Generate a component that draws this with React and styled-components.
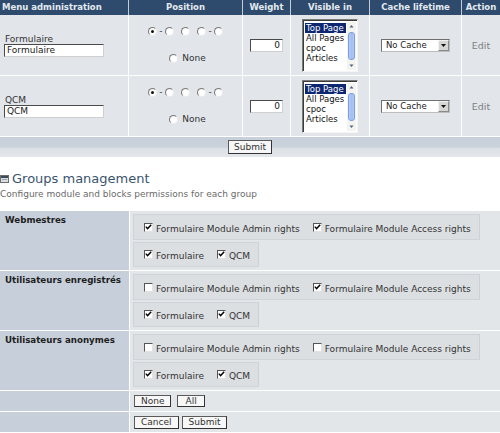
import React from 'react';
import styled, { createGlobalStyle } from 'styled-components';

const GlobalStyle = createGlobalStyle`
  html, body { margin: 0; padding: 0; background: #fff; }
  body {
    font-family: "DejaVu Sans", Verdana, sans-serif;
    font-size: 9px;
    color: #333;
    width: 500px;
    height: 433px;
    overflow: hidden;
  }
`;

const FONT = `"DejaVu Sans", Verdana, sans-serif`;

const Page = styled.div`
  width: 500px;
`;

/* ---------- module table ---------- */
const ModTable = styled.table`
  width: 500px;
  border-collapse: separate;
  border-spacing: 0;
  table-layout: fixed;
`;

const Th = styled.th`
  height: 15px;
  box-sizing: border-box;
  padding: 0 2px;
  background: #2e4b6e;
  color: #e4eaf0;
  font: bold 8.5px/15px ${FONT};
  text-align: ${p => (p.$left ? 'left' : 'center')};
  border-right: 1px solid #c3ccd6;
  white-space: nowrap;
  overflow: hidden;
  &:last-child { border-right: none; }
`;

const Td = styled.td`
  height: ${p => p.$h}px;
  box-sizing: border-box;
  padding: 0;
  background: #e2e6ea;
  border-right: 1px solid #fff;
  border-bottom: 1px solid #fff;
  vertical-align: middle;
  text-align: center;
  &:last-child { border-right: none; }
`;

const FootCell = styled.td`
  height: 20px;
  box-sizing: border-box;
  padding: 0;
  text-align: center;
  vertical-align: middle;
  background: linear-gradient(to bottom, #c7d0da 0%, #cad3dc 50%, #dce1e6 58%, #e3e6ea 100%);
`;

const NameBlock = styled.div`
  display: flex;
  flex-direction: column;
  align-items: flex-start;
  padding-left: 4px;
`;

const NameLabel = styled.span`
  font: 9px/10px ${FONT};
  color: #333;
  padding-left: 1px;
`;

const TextInput = styled.input`
  display: block;
  width: ${p => p.$w}px;
  height: 13px;
  box-sizing: border-box;
  margin: 0;
  padding: 0 2px;
  border: 1px solid;
  border-color: #4a4a4a #cfcfcf #cfcfcf #4a4a4a;
  background: #fff;
  font: 9px/11px ${FONT};
  color: #222;
  text-align: ${p => (p.$right ? 'right' : 'left')};
  outline: none;
`;

const Centered = styled.div`
  display: flex;
  justify-content: center;
  align-items: center;
`;

const PosBlock = styled.div`
  display: flex;
  flex-direction: column;
  align-items: center;
  gap: 18px;
`;

const RadioLine = styled.div`
  display: flex;
  align-items: center;
  height: 9px;
`;

const Radio = styled.span`
  width: 9px;
  height: 9px;
  flex: none;
  box-sizing: border-box;
  border-radius: 50%;
  border: 1px solid;
  border-color: #7b7b7b #ececec #ececec #7b7b7b;
  background: radial-gradient(circle at 60% 60%, #ffffff 40%, #e9e9e9 100%);
  display: flex;
  align-items: center;
  justify-content: center;
  margin: 0 3.5px;
`;

const Dot = styled.span`
  width: 3px;
  height: 3px;
  border-radius: 50%;
  background: #111;
`;

const Dash = styled.span`
  font: 9px/9px ${FONT};
  color: #444;
  margin: 0 -1px;
`;

const RadioText = styled.span`
  font: 9px/9px ${FONT};
  color: #333;
  margin-left: 1px;
`;

const ListBox = styled.div`
  display: flex;
  width: 56px;
  height: 53px;
  box-sizing: border-box;
  border: 1px solid;
  border-color: #7a7a7a #f4f4f4 #f4f4f4 #7a7a7a;
  box-shadow: inset 1px 1px 0 #3c3c3c;
  background: #fff;
  padding: 2px 1px 1px 2px;
`;

const ListItems = styled.div`
  flex: 1;
  display: flex;
  flex-direction: column;
  text-align: left;
  padding-top: 1px;
  overflow: hidden;
`;

const ListItem = styled.div`
  font: 8.5px/10px ${FONT};
  padding-left: 1px;
  margin-right: 1px;
  white-space: nowrap;
  color: ${p => (p.$sel ? '#fff' : '#111')};
  background: ${p => (p.$sel ? '#0c2670' : 'transparent')};
`;

const ScrollBar = styled.div`
  width: 9px;
  display: flex;
  flex-direction: column;
  align-items: center;
  justify-content: space-between;
  background: #f3f3ef;
`;

const ScrollArrow = styled.svg`
  width: 9px;
  height: 8px;
  flex: none;
`;

const ScrollThumb = styled.div`
  width: 7px;
  flex: 1;
  margin: 2px 0;
  box-sizing: border-box;
  border: 1px solid #7c9ede;
  border-radius: 3px;
  background: linear-gradient(to right, #b6cef7, #9dbcf1 60%, #b9cff5);
`;

const Select = styled.div`
  display: flex;
  align-items: center;
  width: 69px;
  height: 13px;
  box-sizing: border-box;
  border: 1px solid;
  border-color: #6f6f6f #bdbdbd #bdbdbd #6f6f6f;
  background: #fff;
`;

const SelectText = styled.span`
  flex: 1;
  text-align: left;
  padding-left: 4px;
  font: 8.5px/11px ${FONT};
  color: #222;
`;

const SelectArrow = styled.span`
  width: 11px;
  height: 11px;
  box-sizing: border-box;
  border: 1px solid;
  border-color: #f2f2f2 #8a8a8a #8a8a8a #f2f2f2;
  background: #d6d6d2;
  display: flex;
  align-items: center;
  justify-content: center;
`;

const EditLink = styled.span`
  font: 9.5px ${FONT};
  color: #808080;
`;

const Button = styled.button`
  height: ${p => p.$h || 13}px;
  box-sizing: border-box;
  margin: 0;
  padding: 0 ${p => p.$px || 6}px;
  border: 1px solid;
  border-color: #5a5a5a #333 #333 #5a5a5a;
  background: #f7f7f7;
  font: 9px/11px ${FONT};
  color: #333;
  cursor: pointer;
`;

/* ---------- groups section ---------- */
const Section = styled.section`
  padding-top: 14px;
`;

const SectionTitle = styled.h3`
  margin: 0;
  display: flex;
  align-items: center;
  gap: 3px;
  font: normal 13px/15px ${FONT};
  color: #3a5470;
`;

const SectionDesc = styled.p`
  margin: 2px 0 11px;
  font: 9px/12px ${FONT};
  color: #6a6a6a;
  white-space: nowrap;
`;

const PermTable = styled.table`
  width: 500px;
  border-collapse: separate;
  border-spacing: 0;
  table-layout: fixed;
`;

const GroupName = styled.th`
  height: ${p => p.$h}px;
  box-sizing: border-box;
  background: #c7d0da;
  text-align: left;
  vertical-align: top;
  padding: 3px 5px 0;
  font: bold 8.7px/13px ${FONT};
  color: #1e1e1e;
  border-right: 1px solid #fff;
  border-bottom: 1px solid #fff;
  white-space: nowrap;
`;

const PermCell = styled.td`
  height: ${p => p.$h}px;
  box-sizing: border-box;
  background: #e3e6e9;
  padding: ${p => (p.$buttons ? '0 3px 0 4px' : '3px 3px 3px')};
  border-bottom: 1px solid #fff;
  vertical-align: ${p => (p.$buttons ? 'middle' : 'top')};
`;

const PermStack = styled.div`
  display: flex;
  flex-direction: column;
  align-items: flex-start;
  gap: 2px;
`;

const PermBox = styled.div`
  display: inline-flex;
  align-items: center;
  gap: 13px;
  height: ${p => p.$h}px;
  box-sizing: border-box;
  padding: 3px 8px 0 10px;
  background: #dcdfe2;
  border: 1px solid #d0d3d7;
  border-right-color: #cdd0d4;
`;

const CheckItem = styled.label`
  display: inline-flex;
  align-items: center;
  gap: 3px;
  font: 9px/12px ${FONT};
  color: #333;
  white-space: nowrap;
`;

const CheckBox = styled.span`
  width: 9px;
  height: 9px;
  flex: none;
  box-sizing: border-box;
  border: 1px solid;
  border-color: #555 #e2e2e2 #e2e2e2 #555;
  background: #fff;
  margin-top: -3px;
  display: flex;
  align-items: center;
  justify-content: center;
`;

const ButtonRow = styled.div`
  display: flex;
  gap: ${p => p.$gap}px;
`;

const GroupIcon = () => (
  <svg width="9" height="8" viewBox="0 0 9 8">
    <rect x="0.5" y="0.5" width="8" height="7" fill="#d9dde2" stroke="#6e6e6e" />
    <rect x="1" y="1" width="7" height="2" fill="#3d4a59" />
    <rect x="2" y="4" width="5" height="1" fill="#9aa3ad" />
  </svg>
);

const Check = ({ on }) => (
  <CheckBox>
    {on && (
      <svg width="7" height="7" viewBox="0 0 7 7">
        <path d="M0.8 2.6 L2.6 4.6 L6.2 0.8" fill="none" stroke="#000" strokeWidth="1.4" />
      </svg>
    )}
  </CheckBox>
);

const Up = () => (
  <ScrollArrow viewBox="0 0 9 8">
    <path d="M2.5 5.5 L4.5 3 L6.5 5.5 Z" fill="#4d6185" />
  </ScrollArrow>
);
const Down = () => (
  <ScrollArrow viewBox="0 0 9 8">
    <path d="M2.5 2.5 L4.5 5 L6.5 2.5 Z" fill="#4d6185" />
  </ScrollArrow>
);

const modules = [
  { name: 'Formulaire', h: 61 },
  { name: 'QCM', h: 61 },
];

const groups = [
  { name: 'Webmestres', admin: true, access: true, form: true, qcm: true },
  { name: 'Utilisateurs enregistrés', admin: false, access: true, form: true, qcm: true },
  { name: 'Utilisateurs anonymes', admin: false, access: false, form: true, qcm: true },
];

const ModuleRow = ({ name, h }) => (
  <tr>
    <Td $h={h} style={{ textAlign: 'left' }}>
      <NameBlock>
        <NameLabel>{name}</NameLabel>
        <TextInput $w={100} defaultValue={name} />
      </NameBlock>
    </Td>
    <Td $h={h}>
      <Centered>
        <PosBlock>
          <RadioLine>
            <Radio><Dot /></Radio>
            <Dash>-</Dash>
            <Radio />
            <Radio />
            <Radio />
            <Dash>-</Dash>
            <Radio />
          </RadioLine>
          <RadioLine>
            <Radio />
            <RadioText>None</RadioText>
          </RadioLine>
        </PosBlock>
      </Centered>
    </Td>
    <Td $h={h}>
      <Centered>
        <TextInput $w={33} $right defaultValue="0" />
      </Centered>
    </Td>
    <Td $h={h}>
      <Centered>
        <ListBox>
          <ListItems>
            <ListItem $sel>Top Page</ListItem>
            <ListItem>All Pages</ListItem>
            <ListItem>cpoc</ListItem>
            <ListItem>Articles</ListItem>
          </ListItems>
          <ScrollBar>
            <Up />
            <ScrollThumb />
            <Down />
          </ScrollBar>
        </ListBox>
      </Centered>
    </Td>
    <Td $h={h}>
      <Centered>
        <Select>
          <SelectText>No Cache</SelectText>
          <SelectArrow>
            <svg width="5" height="3" viewBox="0 0 5 3">
              <path d="M0 0 L5 0 L2.5 3 Z" fill="#111" />
            </svg>
          </SelectArrow>
        </Select>
      </Centered>
    </Td>
    <Td $h={h}>
      <EditLink>Edit</EditLink>
    </Td>
  </tr>
);

export default function App() {
  return (
    <Page>
      <GlobalStyle />
      <ModTable>
        <colgroup>
          <col style={{ width: 129 }} />
          <col style={{ width: 114 }} />
          <col style={{ width: 48 }} />
          <col style={{ width: 79 }} />
          <col style={{ width: 92 }} />
          <col style={{ width: 38 }} />
        </colgroup>
        <thead>
          <tr>
            <Th $left>Menu administration</Th>
            <Th>Position</Th>
            <Th>Weight</Th>
            <Th>Visible in</Th>
            <Th>Cache lifetime</Th>
            <Th>Action</Th>
          </tr>
        </thead>
        <tbody>
          {modules.map(m => (
            <ModuleRow key={m.name} {...m} />
          ))}
          <tr>
            <FootCell colSpan={6}>
              <Button $h={14} $px={5}>Submit</Button>
            </FootCell>
          </tr>
        </tbody>
      </ModTable>

      <Section>
        <SectionTitle>
          <GroupIcon />
          Groups management
        </SectionTitle>
        <SectionDesc>Configure module and blocks permissions for each group</SectionDesc>
        <PermTable>
          <colgroup>
            <col style={{ width: 130 }} />
            <col style={{ width: 370 }} />
          </colgroup>
          <tbody>
            {groups.map(g => (
              <tr key={g.name}>
                <GroupName $h={60}>{g.name}</GroupName>
                <PermCell $h={60}>
                  <PermStack>
                    <PermBox $h={26}>
                      <CheckItem><Check on={g.admin} />Formulaire Module Admin rights</CheckItem>
                      <CheckItem><Check on={g.access} />Formulaire Module Access rights</CheckItem>
                    </PermBox>
                    <PermBox $h={25}>
                      <CheckItem><Check on={g.form} />Formulaire</CheckItem>
                      <CheckItem><Check on={g.qcm} />QCM</CheckItem>
                    </PermBox>
                  </PermStack>
                </PermCell>
              </tr>
            ))}
            <tr>
              <GroupName $h={21} />
              <PermCell $h={21} $buttons>
                <ButtonRow $gap={6}>
                  <Button $h={12}>None</Button>
                  <Button $h={12} $px={7}>All</Button>
                </ButtonRow>
              </PermCell>
            </tr>
            <tr>
              <GroupName $h={21} />
              <PermCell $h={21} $buttons>
                <ButtonRow $gap={3}>
                  <Button>Cancel</Button>
                  <Button>Submit</Button>
                </ButtonRow>
              </PermCell>
            </tr>
          </tbody>
        </PermTable>
      </Section>
    </Page>
  );
}
